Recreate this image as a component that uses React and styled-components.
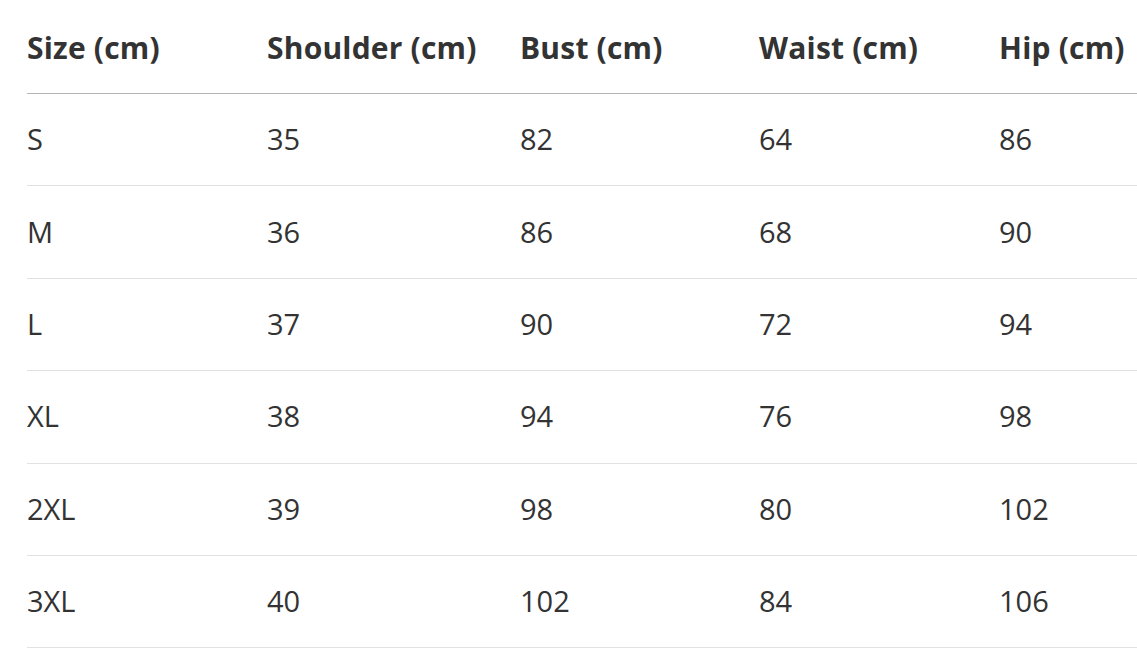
import React from 'react';
import styled, { createGlobalStyle } from 'styled-components';

const GlobalStyle = createGlobalStyle`
  html, body {
    margin: 0;
    padding: 0;
    background: #ffffff;
    overflow: hidden;
  }
  body {
    font-family: "Open Sans", "Noto Sans", "Liberation Sans", sans-serif;
    color: #333333;
  }
`;

const columns = ['Size (cm)', 'Shoulder (cm)', 'Bust (cm)', 'Waist (cm)', 'Hip (cm)'];

const rows = [
  ['S', '35', '82', '64', '86'],
  ['M', '36', '86', '68', '90'],
  ['L', '37', '90', '72', '94'],
  ['XL', '38', '94', '76', '98'],
  ['2XL', '39', '98', '80', '102'],
  ['3XL', '40', '102', '84', '106'],
];

function SizeChart() {
  return (
    <Wrap>
      <Table>
        <HeadRow>
          {columns.map((c) => (
            <HeadCell key={c}>{c}</HeadCell>
          ))}
        </HeadRow>
        {rows.map((r) => (
          <Row key={r[0]}>
            {r.map((v, i) => (
              // eslint-disable-next-line react/no-array-index-key
              <Cell key={i}>{v}</Cell>
            ))}
          </Row>
        ))}
      </Table>
    </Wrap>
  );
}

const Wrap = styled.div`
  padding-left: 27px;
  width: 1110px;
`;

const Table = styled.div`
  display: flex;
  flex-direction: column;
`;

const HeadRow = styled.div`
  display: grid;
  grid-template-columns: 240px 253px 239px 240px 1fr;
  height: 94px;
  align-items: center;
  border-bottom: 1px solid #b4b4b4;
  box-sizing: border-box;
  padding-top: 2px;
`;

const Row = styled.div`
  display: grid;
  grid-template-columns: 240px 253px 239px 240px 1fr;
  height: 92.4px;
  align-items: center;
  border-bottom: 1px solid #e2e2e2;
  box-sizing: border-box;
  padding-bottom: 2px;
`;

const HeadCell = styled.div`
  font-size: 30px;
  font-weight: 700;
  color: #333333;
  white-space: nowrap;
  letter-spacing: 0.2px;
`;

const Cell = styled.div`
  font-size: 29px;
  font-weight: 400;
  color: #333333;
  white-space: nowrap;
`;

export default function App() {
  return (
    <>
      <GlobalStyle />
      <SizeChart />
    </>
  );
}
